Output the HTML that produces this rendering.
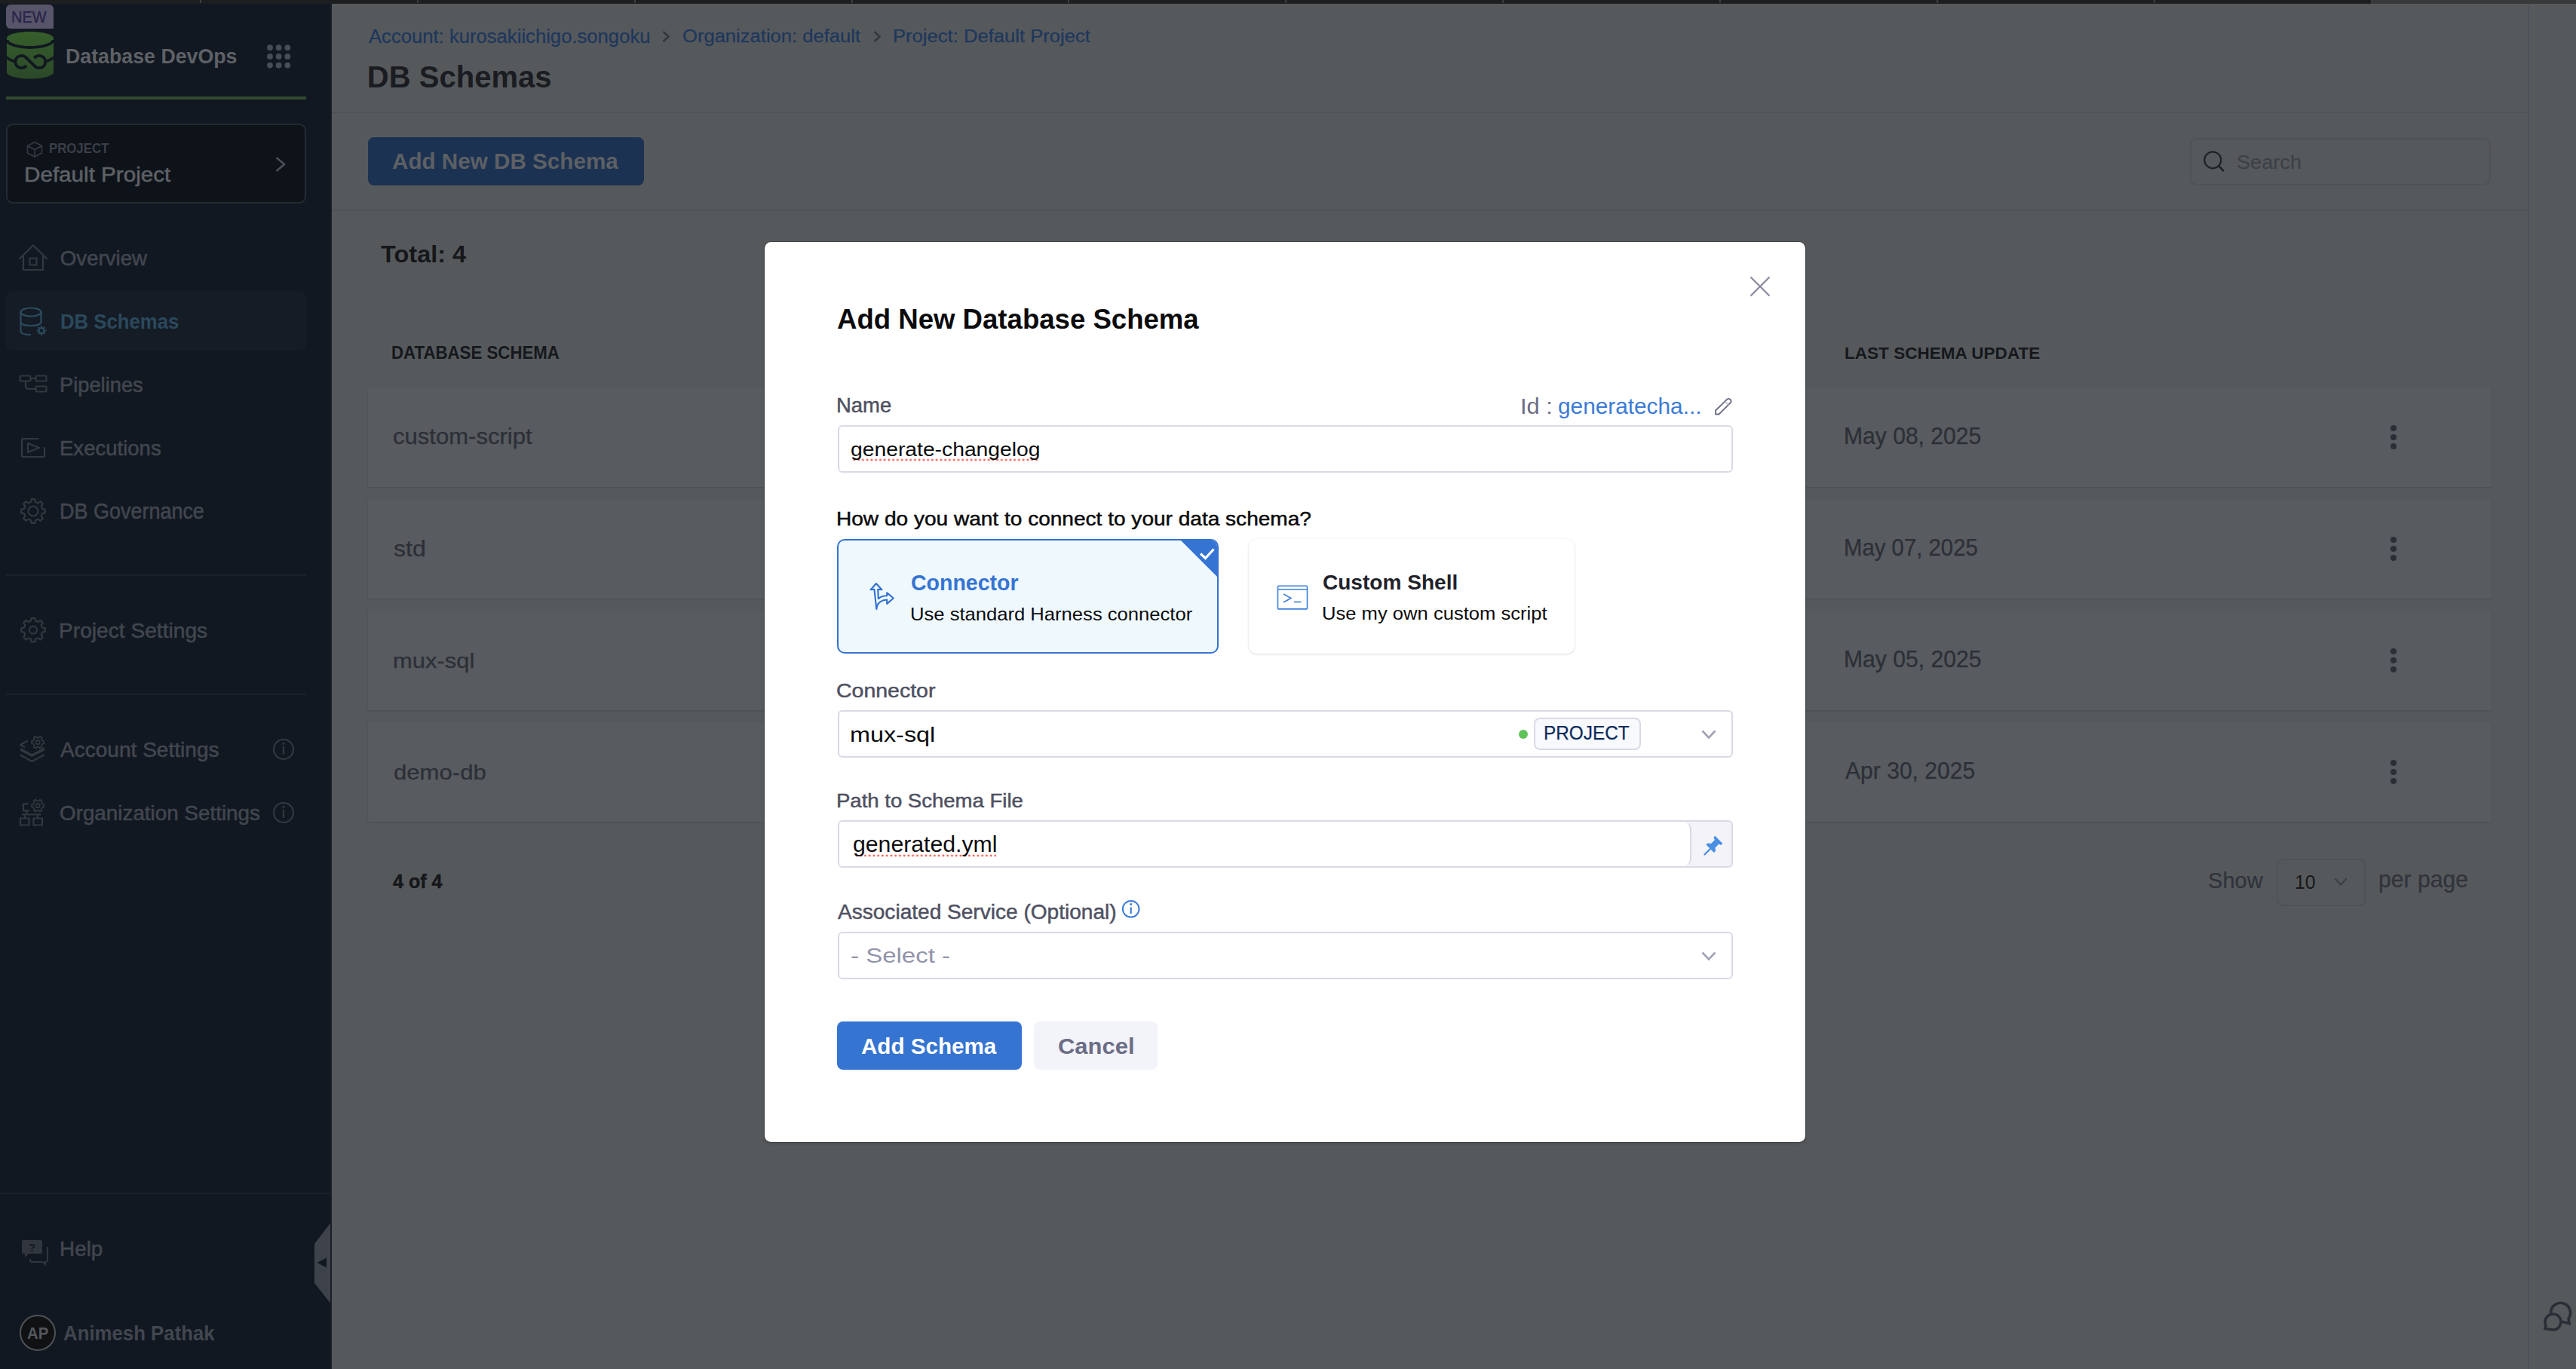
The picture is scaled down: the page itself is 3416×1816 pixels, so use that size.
<!DOCTYPE html>
<html><head><meta charset="utf-8">
<style>
*{box-sizing:border-box;margin:0;padding:0}
html,body{width:3416px;height:1816px;overflow:hidden}
body{background:#56595c;font-family:"Liberation Sans",sans-serif;position:relative}
.a{position:absolute}
.t{position:absolute;white-space:nowrap;transform-origin:0 0}
svg{position:absolute;overflow:visible}
</style></head><body>
<!-- top strip -->
<div class="a" style="left:0;top:0;width:3416px;height:4.5px;background:#1d1e20"></div><div class="a" style="left:3144px;top:0;width:272px;height:4.5px;background:#38393b"></div><div class="a" style="left:265.0px;top:0;width:2px;height:4px;background:#3d3d3f"></div><div class="a" style="left:552.9px;top:0;width:2px;height:4px;background:#3d3d3f"></div><div class="a" style="left:840.7px;top:0;width:2px;height:4px;background:#3d3d3f"></div><div class="a" style="left:1128.6px;top:0;width:2px;height:4px;background:#3d3d3f"></div><div class="a" style="left:1416.4px;top:0;width:2px;height:4px;background:#3d3d3f"></div><div class="a" style="left:1704.2px;top:0;width:2px;height:4px;background:#3d3d3f"></div><div class="a" style="left:1992.1px;top:0;width:2px;height:4px;background:#3d3d3f"></div><div class="a" style="left:2280.0px;top:0;width:2px;height:4px;background:#3d3d3f"></div><div class="a" style="left:2567.8px;top:0;width:2px;height:4px;background:#3d3d3f"></div><div class="a" style="left:2855.7px;top:0;width:2px;height:4px;background:#3d3d3f"></div><div class="a" style="left:3143.5px;top:0;width:2px;height:4px;background:#3d3d3f"></div>

<!-- sidebar -->
<div class="a" style="left:0;top:5px;width:440px;height:1811px;background:#111821"></div>
<div class="a" style="left:8px;top:6px;width:63px;height:32px;background:#58556b;border-radius:6px 6px 0 6px"></div>
<svg style="left:0;top:0" width="80" height="110" viewBox="0 0 80 110">
 <defs><linearGradient id="lg" x1="0" y1="0" x2="0" y2="1"><stop offset="0" stop-color="#365e2a"/><stop offset="1" stop-color="#2b4829"/></linearGradient></defs>
 <path d="M9 50.6 A31 8.6 0 0 1 71 50.6 V96 A31 8.6 0 0 1 9 96 Z" fill="url(#lg)"/>
 <path d="M9.5 53 A30.5 10 0 0 0 70.5 53" fill="none" stroke="#111821" stroke-width="3.8"/>
 <path d="M8 76 Q14 80 20 82" fill="none" stroke="#111821" stroke-width="3.8"/>
 <path d="M72 76 Q66 80 60 82" fill="none" stroke="#111821" stroke-width="3.8"/>
 <path d="M35 87 A8.2 8.2 0 1 1 35 77 L45.5 87 A8.2 8.2 0 1 0 45.5 77" fill="none" stroke="#111821" stroke-width="3.8"/>
</svg>
<svg style="left:0;top:0" width="440" height="280">
 <g fill="#484c55"><circle cx="358" cy="63.2" r="3.9"/><circle cx="369.6" cy="63.2" r="3.9"/><circle cx="381.3" cy="63.2" r="3.9"/>
 <circle cx="358" cy="74.9" r="3.9"/><circle cx="369.6" cy="74.9" r="3.9"/><circle cx="381.3" cy="74.9" r="3.9"/>
 <circle cx="358" cy="86.6" r="3.9"/><circle cx="369.6" cy="86.6" r="3.9"/><circle cx="381.3" cy="86.6" r="3.9"/></g>
</svg>
<div class="a" style="left:8px;top:128px;width:398px;height:4px;background:#324a2e"></div>
<div class="a" style="left:8px;top:164px;width:398px;height:106px;border:2px solid #252a33;border-radius:9px;background:#0e131a"></div>
<svg style="left:0;top:0" width="440" height="280">
 <g fill="none" stroke="#363942" stroke-width="1.6" stroke-linejoin="round">
  <path d="M46 188.5 L55.5 193.5 V203 L46 208 L36.5 203 V193.5 Z"/>
  <path d="M36.5 193.5 L46 198.5 L55.5 193.5 M46 198.5 V208"/>
 </g>
 <path d="M366.5 209 L377 218 L366.5 227" fill="none" stroke="#4a4f58" stroke-width="2.6"/>
</svg>

<!-- nav -->
<div class="a" style="left:8px;top:386px;width:398px;height:79px;background:#151c26;border-radius:8px"></div>
<svg style="left:0;top:0" width="440" height="1816">
 <g fill="none" stroke="#33373f" stroke-width="2.2" stroke-linejoin="round">
  <!-- house -->
  <path d="M25.5 343.5 L44 325.5 L62.5 343.5 M31 340 V358 H57 V340"/>
  <rect x="39.5" y="342.5" width="9" height="9"/>
  <!-- pipelines -->
  <rect x="26.5" y="498.5" width="14" height="7" rx="1.5"/>
  <rect x="47.5" y="498.5" width="14" height="7" rx="1.5"/>
  <rect x="47.5" y="512.5" width="14" height="7" rx="1.5"/>
  <path d="M40.5 502 H47.5 M34 505.5 V512 Q34 516 38 516 H47.5"/>
  <!-- executions -->
  <path d="M51.5 582 H30 Q29 582 29 583 V605 Q29 606 30 606 H58 Q59 606 59 605 V593"/>
  <path d="M37 588 L52 594 L37 600 Z"/>
  <!-- gear governance -->
  <circle cx="44" cy="678" r="6.5"/>
  <path d="M56.1 675.0 L59.8 675.7 L59.8 680.3 L56.1 681.0 L54.7 684.5 L56.8 687.6 L53.6 690.8 L50.5 688.7 L47.0 690.1 L46.3 693.8 L41.7 693.8 L41.0 690.1 L37.5 688.7 L34.4 690.8 L31.2 687.6 L33.3 684.5 L31.9 681.0 L28.2 680.3 L28.2 675.7 L31.9 675.0 L33.3 671.5 L31.2 668.4 L34.4 665.2 L37.5 667.3 L41.0 665.9 L41.7 662.2 L46.3 662.2 L47.0 665.9 L50.5 667.3 L53.6 665.2 L56.8 668.4 L54.7 671.5 Z"/>
  <!-- gear project settings -->
  <circle cx="44" cy="835.7" r="5"/>
  <path d="M56.1 832.7 L59.8 833.4 L59.8 838.0 L56.1 838.7 L54.7 842.2 L56.8 845.3 L53.6 848.5 L50.5 846.4 L47.0 847.8 L46.3 851.5 L41.7 851.5 L41.0 847.8 L37.5 846.4 L34.4 848.5 L31.2 845.3 L33.3 842.2 L31.9 838.7 L28.2 838.0 L28.2 833.4 L31.9 832.7 L33.3 829.2 L31.2 826.1 L34.4 822.9 L37.5 825.0 L41.0 823.6 L41.7 819.9 L46.3 819.9 L47.0 823.6 L50.5 825.0 L53.6 822.9 L56.8 826.1 L54.7 829.2 Z"/>
  <!-- account settings layers -->
  <path d="M37 982.5 L27 988 L33 991.5"/>
  <path d="M26.6 1001.3 L42.3 1010 L58.9 1001.3"/>
  <path d="M56.2 982.7 L58.3 983.1 L58.3 986.3 L56.2 986.7 L54.9 988.9 L55.7 991.0 L52.9 992.6 L51.5 990.9 L48.9 990.9 L47.5 992.6 L44.7 991.0 L45.5 988.9 L44.2 986.7 L42.1 986.3 L42.1 983.1 L44.2 982.7 L45.5 980.5 L44.7 978.4 L47.5 976.8 L48.9 978.5 L51.5 978.5 L52.9 976.8 L55.7 978.4 L54.9 980.5 Z" stroke-width="1.8"/>
  <circle cx="50.2" cy="984.7" r="2.6" stroke-width="1.6"/>
  <!-- org -->
  <rect x="27" y="1085.5" width="11.5" height="9"/>
  <rect x="44.5" y="1085.5" width="11.5" height="9"/>
  <path d="M37.6 1066.3 H31 V1075.3 H39 M35.2 1075.3 V1080.5 M29 1080.5 H54.2 M32.8 1080.5 V1085.5 M49.9 1080.5 V1085.5"/>
  <path d="M56.2 1066.7 L58.3 1067.1 L58.3 1070.3 L56.2 1070.7 L54.9 1072.9 L55.7 1075.0 L52.9 1076.6 L51.5 1074.9 L48.9 1074.9 L47.5 1076.6 L44.7 1075.0 L45.5 1072.9 L44.2 1070.7 L42.1 1070.3 L42.1 1067.1 L44.2 1066.7 L45.5 1064.5 L44.7 1062.4 L47.5 1060.8 L48.9 1062.5 L51.5 1062.5 L52.9 1060.8 L55.7 1062.4 L54.9 1064.5 Z" stroke-width="1.8"/>
  <circle cx="50.2" cy="1068.7" r="2.6" stroke-width="1.6"/>
  <!-- info icons -->
  <circle cx="376" cy="994" r="13"/>
  <circle cx="376" cy="1078" r="13"/>
  <path d="M376 990 V1001 M376 1074 V1085"/>
 </g>
 <path d="M27 992 L42.3 1000 L59 991.5 V995.5 L42.3 1004 L27 996 Z" fill="#33373f"/>
 <g fill="#33373f"><circle cx="376" cy="986.5" r="1.6"/><circle cx="376" cy="1070.5" r="1.6"/></g>
 <!-- db schemas icon active -->
 <g fill="none" stroke="#2b4b5e" stroke-width="2.2">
  <ellipse cx="41" cy="414" rx="13.5" ry="5.5"/>
  <path d="M27.5 414 V439 Q27.5 444 41 444 M27.5 426.5 Q27.5 432 41 432 Q54.5 432 54.5 426.5 M54.5 414 V428"/>
  <circle cx="55" cy="438.5" r="3.5"/>
 </g>
 <path d="M55 432 V434 M55 443 V445 M48.5 438.5 H50.5 M59.5 438.5 H61.5 M50.5 434 L52 435.5 M58 441.5 L59.5 443 M50.5 443 L52 441.5 M58 435.5 L59.5 434" stroke="#2b4b5e" stroke-width="2"/>
 <!-- help icon -->
 <path d="M31 1645 H54 Q56 1645 56 1647 V1661 Q56 1663 54 1663 H38 L33 1668 V1663 H31 Q29 1663 29 1661 V1647 Q29 1645 31 1645 Z" fill="#30353e"/>
 <path d="M40 1670 V1671 Q40 1674 43 1674 H57 L60 1677 V1674 Q63 1674 63 1671 V1654" fill="none" stroke="#30353e" stroke-width="2"/>
 <text x="42.5" y="1660" font-family="Liberation Sans" font-size="14" font-weight="bold" fill="#111821" text-anchor="middle">?</text>
</svg>
<div class="a" style="left:8px;top:762px;width:398px;height:2px;background:#1c222b"></div>
<div class="a" style="left:8px;top:920px;width:398px;height:2px;background:#1c222b"></div>
<div class="a" style="left:0;top:1582px;width:439px;height:2px;background:#1c222b"></div>
<svg style="left:0;top:0" width="440" height="1816">
 <path d="M440 1620 L417 1650 V1702 L440 1731 Z" fill="#3e424b"/>
 <path d="M420.5 1675 L433 1668.5 V1681.5 Z" fill="#111821"/>
</svg>
<div class="a" style="left:26px;top:1744px;width:48px;height:48px;border-radius:50%;border:2px solid #4f5256;background:#101113"></div>

<div class="a" style="left:438px;top:5px;width:2px;height:1811px;background:#1b1f25"></div>
<!-- main -->
<svg style="left:0;top:0" width="1300" height="80">
 <path d="M879.5 42 L886.5 48.5 L879.5 55" fill="none" stroke="#34373e" stroke-width="2.6"/>
 <path d="M1159.5 42 L1166.5 48.5 L1159.5 55" fill="none" stroke="#34373e" stroke-width="2.6"/>
</svg>
<div class="a" style="left:3352px;top:5px;width:2px;height:1811px;background:#4e5259"></div>
<div class="a" style="left:440px;top:147.5px;width:2912px;height:2px;background:#4f5358"></div>
<div class="a" style="left:440px;top:277.5px;width:2912px;height:2px;background:#4f5358"></div>
<div class="a" style="left:488px;top:182px;width:366px;height:64px;border-radius:8px;background:#1c3253"></div>
<div class="a" style="left:2904px;top:182.5px;width:399px;height:63px;border-radius:9px;border:2px solid #4e5258"></div>
<svg style="left:0;top:0" width="3416" height="1816">
 <circle cx="2934.3" cy="212.3" r="11" fill="none" stroke="#1f2227" stroke-width="2.2"/>
 <path d="M2942 220 L2949 227" stroke="#1f2227" stroke-width="2.6"/>
</svg>
<!-- table cards -->
<div class="a" style="left:488px;top:513.5px;width:2816px;height:132.5px;background:#585b5f;box-shadow:0 1px 2px rgba(0,0,0,.12)"></div>
<div class="a" style="left:488px;top:661.5px;width:2816px;height:132.5px;background:#585b5f;box-shadow:0 1px 2px rgba(0,0,0,.12)"></div>
<div class="a" style="left:488px;top:809.5px;width:2816px;height:132.5px;background:#585b5f;box-shadow:0 1px 2px rgba(0,0,0,.12)"></div>
<div class="a" style="left:488px;top:957.5px;width:2816px;height:132.5px;background:#585b5f;box-shadow:0 1px 2px rgba(0,0,0,.12)"></div>
<svg style="left:0;top:0" width="3416" height="1816">
 <g fill="#2b2e36">
  <circle cx="3174" cy="568" r="4"/><circle cx="3174" cy="580" r="4"/><circle cx="3174" cy="592" r="4"/>
  <circle cx="3174" cy="716" r="4"/><circle cx="3174" cy="728" r="4"/><circle cx="3174" cy="740" r="4"/>
  <circle cx="3174" cy="864" r="4"/><circle cx="3174" cy="876" r="4"/><circle cx="3174" cy="888" r="4"/>
  <circle cx="3174" cy="1012" r="4"/><circle cx="3174" cy="1024" r="4"/><circle cx="3174" cy="1036" r="4"/>
 </g>
 <path d="M3096.5 1165.5 L3104 1173.5 L3111.5 1165.5" fill="none" stroke="#3a3d45" stroke-width="2"/>
 <!-- chat icon -->
 <g fill="none" stroke="#2b2e36" stroke-width="3.6" stroke-linecap="round">
  <path d="M3382.5 1741 A13 13 0 1 1 3406 1749 L3407 1755.5 L3399 1753.5"/>
  <path d="M3385 1764 A10.5 10.5 0 1 0 3376 1758 L3375 1762.5 Z"/>
 </g>
</svg>
<div class="a" style="left:3019px;top:1138.5px;width:118px;height:63px;border-radius:8px;border:2px solid #4e5258"></div>

<!-- modal -->
<div class="a" style="left:1013.7px;top:320.8px;width:1380.5px;height:1194.3px;background:#fff;border-radius:8.5px;box-shadow:0 0 0 1px rgba(30,33,38,.35),0 2px 4px rgba(0,0,0,.15)"></div>
<svg style="left:0;top:0" width="3416" height="1816">
 <path d="M2321.5 367.5 L2346.5 392.5 M2346.5 367.5 L2321.5 392.5" stroke="#8c8da0" stroke-width="2.4"/>
 <!-- pencil -->
 <g fill="none" stroke="#6b6d85" stroke-width="1.8" stroke-linejoin="round">
  <path d="M2275 544.5 L2290.5 529.5 Q2292.5 528 2294.5 530 Q2296.5 532 2295 534 L2279.5 549.5 H2275 Z"/>
  <path d="M2288 533 L2292 537" stroke="#c5c6d3"/>
 </g>
</svg>
<div class="a" style="left:1110.5px;top:563.5px;width:1187px;height:63px;border:2px solid #d9dae6;border-radius:6px"></div>
<div class="a" style="left:1130px;top:607.5px;width:247px;height:4px;background-image:radial-gradient(circle,#f0695f 1.3px,transparent 1.7px);background-size:5.75px 4px"></div>

<!-- cards -->
<div class="a" style="left:1110px;top:715px;width:505.5px;height:152px;border:2px solid #3574d3;border-radius:10px;background:#eff8fd;overflow:hidden">
 <div class="a" style="right:-2px;top:-2px;width:0;height:0;border-style:solid;border-width:0 52px 52px 0;border-color:transparent #3574d3 transparent transparent"></div>
</div>
<div class="a" style="left:1656px;top:715px;width:432px;height:152px;border-radius:10px;background:#fff;box-shadow:0 0 1px rgba(40,41,61,.10),0 1px 3px rgba(96,97,112,.20)"></div>
<svg style="left:0;top:0" width="3416" height="1816">
 <path d="M1592 734.5 L1598.5 740.5 L1609.5 728.5" fill="none" stroke="#fff" stroke-width="3.2"/>
 <!-- connector icon -->
 <path d="M1162.3 808 L1159.4 781.8 L1154.6 782.2 L1161.9 774 L1169.4 782.2 L1164.2 781.8 L1164.8 794.2 Q1168.5 790.4 1176.2 790.2 L1176.2 786.4 L1184.8 793.5 L1176.2 801 L1176.2 795.5 Q1166.5 796 1163.2 803.5 Z" fill="none" stroke="#3070d0" stroke-width="2.1" stroke-linejoin="round"/>
 <!-- terminal icon -->
 <g fill="none" stroke="#3d7fd9" stroke-width="1.6">
  <rect x="1694.5" y="777.3" width="39" height="30.6" rx="1"/>
  <path d="M1694.5 781.8 H1733.5"/>
  <path d="M1702 788 L1712 793.5 L1702 799"/>
  <path d="M1716 798.5 H1725.5"/>
 </g>
</svg>

<div class="a" style="left:1110.5px;top:941.5px;width:1187px;height:63px;border:2px solid #d9dae6;border-radius:6px"></div>
<div class="a" style="left:2014px;top:968px;width:12px;height:12px;border-radius:50%;background:#5fc35b"></div>
<div class="a" style="left:2033.5px;top:951.5px;width:142px;height:43px;border:2px solid #d9dae6;border-radius:8px;background:#f8f9fc"></div>
<svg style="left:0;top:0" width="3416" height="1816">
 <path d="M2257.5 969.5 L2266 978.5 L2274.5 969.5" fill="none" stroke="#a2a3b5" stroke-width="2.6"/>
 <path d="M2257.5 1263.5 L2266 1272.5 L2274.5 1263.5" fill="none" stroke="#a2a3b5" stroke-width="2.6"/>
</svg>

<div class="a" style="left:1110.5px;top:1087.5px;width:1187px;height:63px;border:2px solid #d9dae6;border-radius:6px;background:#f3f3f8;overflow:hidden">
 <div class="a" style="left:0;top:0;width:1130px;height:59px;background:#fff;border-radius:0 10px 10px 0;border-right:2px solid #d9dae6"></div>
</div>
<div class="a" style="left:1133px;top:1132.5px;width:188px;height:4px;background-image:radial-gradient(circle,#f0695f 1.3px,transparent 1.7px);background-size:5.75px 4px"></div>
<svg style="left:0;top:0" width="3416" height="1816">
 <g fill="#4a90e2">
  <path d="M2274 1108.5 L2284.5 1119 L2282 1121 L2279.5 1119.5 L2274.5 1124.5 L2275 1129 L2273 1131 L2262.5 1120.5 L2264.5 1118.5 L2269 1119 L2274 1114 L2272.5 1111.5 Z"/>
 </g>
 <path d="M2268 1126 L2260.5 1133.5" stroke="#4a90e2" stroke-width="2.4" stroke-linecap="round"/>
 <!-- info -->
 <circle cx="1499.7" cy="1205.8" r="10.8" fill="none" stroke="#3b7bd6" stroke-width="2"/>
 <path d="M1499.7 1203.5 V1212" stroke="#3b7bd6" stroke-width="2.2"/>
 <circle cx="1499.7" cy="1199.5" r="1.5" fill="#3b7bd6"/>
</svg>
<div class="a" style="left:1110.5px;top:1235.5px;width:1187px;height:63px;border:2px solid #d9dae6;border-radius:6px"></div>

<div class="a" style="left:1110px;top:1355px;width:244.5px;height:63.5px;border-radius:8px;background:#3574d1"></div>
<div class="a" style="left:1371px;top:1355px;width:163.5px;height:63.5px;border-radius:8px;background:#f3f3fa"></div>

<div class="t" style="left:14.8px;top:11.9px;font-size:21.69px;line-height:21.69px;font-weight:normal;color:#2b2648;transform:scaleX(0.92);-webkit-text-stroke:0.5px #2b2648">NEW</div>
<div class="t" style="left:86.6px;top:60.7px;font-size:27.25px;line-height:27.25px;font-weight:bold;color:#5e6166;transform:scaleX(0.9817)">Database DevOps</div>
<div class="t" style="left:65.4px;top:188.7px;font-size:17.53px;line-height:17.53px;font-weight:bold;color:#3b3e47;transform:scaleX(0.9579)">PROJECT</div>
<div class="t" style="left:32.4px;top:217.6px;font-size:27.53px;line-height:27.53px;font-weight:normal;color:#5e6166;transform:scaleX(1.0768);-webkit-text-stroke:0.55px #5e6166">Default Project</div>
<div class="t" style="left:79.8px;top:328.9px;font-size:27.67px;line-height:27.67px;font-weight:normal;color:#42464f;-webkit-text-stroke:0.55px #42464f">Overview</div>
<div class="t" style="left:79.7px;top:412.9px;font-size:27.67px;line-height:27.67px;font-weight:bold;color:#2b495c;transform:scaleX(0.9305)">DB Schemas</div>
<div class="t" style="left:79.3px;top:496.9px;font-size:27.67px;line-height:27.67px;font-weight:normal;color:#42464f;transform:scaleX(0.9862);-webkit-text-stroke:0.55px #42464f">Pipelines</div>
<div class="t" style="left:79.3px;top:581.0px;font-size:27.8px;line-height:27.8px;font-weight:normal;color:#42464f;transform:scaleX(0.9905);-webkit-text-stroke:0.55px #42464f">Executions</div>
<div class="t" style="left:79.3px;top:664.2px;font-size:28.8px;line-height:28.8px;font-weight:normal;color:#42464f;transform:scaleX(0.9365);-webkit-text-stroke:0.55px #42464f">DB Governance</div>
<div class="t" style="left:78.2px;top:823.2px;font-size:27.94px;line-height:27.94px;font-weight:normal;color:#42464f;transform:scaleX(1.0074);-webkit-text-stroke:0.55px #42464f">Project Settings</div>
<div class="t" style="left:80.4px;top:981.6px;font-size:26.84px;line-height:26.84px;font-weight:normal;color:#42464f;transform:scaleX(1.0456);-webkit-text-stroke:0.55px #42464f">Account Settings</div>
<div class="t" style="left:79.2px;top:1064.6px;font-size:28.08px;line-height:28.08px;font-weight:normal;color:#42464f;transform:scaleX(0.9906);-webkit-text-stroke:0.55px #42464f">Organization Settings</div>
<div class="t" style="left:79.1px;top:1643.1px;font-size:27.8px;line-height:27.8px;font-weight:normal;color:#42464f;-webkit-text-stroke:0.55px #42464f">Help</div>
<div class="t" style="left:35.5px;top:1757.6px;font-size:21.69px;line-height:21.69px;font-weight:bold;color:#55585d;transform:scaleX(0.9359)">AP</div>
<div class="t" style="left:83.9px;top:1754.9px;font-size:27.12px;line-height:27.12px;font-weight:bold;color:#42464f;transform:scaleX(0.9516)">Animesh Pathak</div>
<div class="t" style="left:488.7px;top:35.8px;font-size:24.91px;line-height:24.91px;font-weight:normal;color:#1d375c;transform:scaleX(1.0296);-webkit-text-stroke:0.25px #1d375c">Account: kurosakiichigo.songoku</div>
<div class="t" style="left:904.7px;top:36.0px;font-size:24.64px;line-height:24.64px;font-weight:normal;color:#1d375c;transform:scaleX(1.0387);-webkit-text-stroke:0.25px #1d375c">Organization: default</div>
<div class="t" style="left:1184.0px;top:36.0px;font-size:24.64px;line-height:24.64px;font-weight:normal;color:#1d375c;transform:scaleX(1.0399);-webkit-text-stroke:0.25px #1d375c">Project: Default Project</div>
<div class="t" style="left:486.8px;top:82.2px;font-size:40.06px;line-height:40.06px;font-weight:bold;color:#1a1c21">DB Schemas</div>
<div class="t" style="left:519.7px;top:199.3px;font-size:29.59px;line-height:29.59px;font-weight:bold;color:#5d6064;transform:scaleX(1.0022)">Add New DB Schema</div>
<div class="t" style="left:2966.1px;top:201.9px;font-size:26.15px;line-height:26.15px;font-weight:normal;color:#3d4147;transform:scaleX(1.0384);-webkit-text-stroke:0.25px #3d4147">Search</div>
<div class="t" style="left:504.9px;top:320.7px;font-size:32.07px;line-height:32.07px;font-weight:bold;color:#15171a;transform:scaleX(1.0141)">Total: 4</div>
<div class="t" style="left:519.4px;top:456.3px;font-size:23.81px;line-height:23.81px;font-weight:bold;color:#15181c;transform:scaleX(0.9349)">DATABASE SCHEMA</div>
<div class="t" style="left:2445.5px;top:456.8px;font-size:22.95px;line-height:22.95px;font-weight:bold;color:#15181c;transform:scaleX(0.9831)">LAST SCHEMA UPDATE</div>
<div class="t" style="left:521.2px;top:565.3px;font-size:29.04px;line-height:29.04px;font-weight:normal;color:#2c2f37;transform:scaleX(1.07);-webkit-text-stroke:0.25px #2c2f37">custom-script</div>
<div class="t" style="left:522.0px;top:713.9px;font-size:28.91px;line-height:28.91px;font-weight:normal;color:#2c2f37;transform:scaleX(1.1076);-webkit-text-stroke:0.25px #2c2f37">std</div>
<div class="t" style="left:521.0px;top:862.9px;font-size:27.53px;line-height:27.53px;font-weight:normal;color:#2c2f37;transform:scaleX(1.1253);-webkit-text-stroke:0.25px #2c2f37">mux-sql</div>
<div class="t" style="left:521.8px;top:1009.9px;font-size:28.22px;line-height:28.22px;font-weight:normal;color:#2c2f37;transform:scaleX(1.1021);-webkit-text-stroke:0.25px #2c2f37">demo-db</div>
<div class="t" style="left:2444.6px;top:564.1px;font-size:30.93px;line-height:30.93px;font-weight:normal;color:#2c2f37;transform:scaleX(0.9725);-webkit-text-stroke:0.25px #2c2f37">May 08, 2025</div>
<div class="t" style="left:2444.7px;top:712.1px;font-size:30.93px;line-height:30.93px;font-weight:normal;color:#2c2f37;transform:scaleX(0.9491);-webkit-text-stroke:0.25px #2c2f37">May 07, 2025</div>
<div class="t" style="left:2444.6px;top:860.1px;font-size:30.93px;line-height:30.93px;font-weight:normal;color:#2c2f37;transform:scaleX(0.9742);-webkit-text-stroke:0.25px #2c2f37">May 05, 2025</div>
<div class="t" style="left:2446.8px;top:1008.1px;font-size:30.93px;line-height:30.93px;font-weight:normal;color:#2c2f37;transform:scaleX(0.9727);-webkit-text-stroke:0.25px #2c2f37">Apr 30, 2025</div>
<div class="t" style="left:520.6px;top:1156.7px;font-size:25.19px;line-height:25.19px;font-weight:bold;color:#15171a;transform:scaleX(0.9963);-webkit-text-stroke:0.5px #15171a">4 of 4</div>
<div class="t" style="left:2928.2px;top:1153.8px;font-size:28.77px;line-height:28.77px;font-weight:normal;color:#30333b;transform:scaleX(1.0103);-webkit-text-stroke:0.25px #30333b">Show</div>
<div class="t" style="left:3042.5px;top:1157.5px;font-size:25.37px;line-height:25.37px;font-weight:normal;color:#15171a;transform:scaleX(0.9813)">10</div>
<div class="t" style="left:3153.5px;top:1151.3px;font-size:31.76px;line-height:31.76px;font-weight:normal;color:#30333b;transform:scaleX(0.9486);-webkit-text-stroke:0.25px #30333b">per page</div>
<div class="t" style="left:1110.0px;top:406.4px;font-size:36.89px;line-height:36.89px;font-weight:bold;color:#0b0b0d;transform:scaleX(0.9918)">Add New Database Schema</div>
<div class="t" style="left:1109.0px;top:523.6px;font-size:28.05px;line-height:28.05px;font-weight:normal;color:#4f5162;transform:scaleX(0.9776);-webkit-text-stroke:0.5px #4f5162">Name</div>
<div class="t" style="left:2016.1px;top:524.6px;font-size:29.04px;line-height:29.04px;font-weight:normal;color:#6b6d85;transform:scaleX(1.0614)">Id :</div>
<div class="t" style="left:2065.7px;top:524.6px;font-size:29.04px;line-height:29.04px;font-weight:normal;color:#3b7bd6;transform:scaleX(1.0261)">generatecha...</div>
<div class="t" style="left:1127.6px;top:582.7px;font-size:26.02px;line-height:26.02px;font-weight:normal;color:#0b0b0d;transform:scaleX(1.0867)">generate-changelog</div>
<div class="t" style="left:1109.0px;top:674.5px;font-size:26.7px;line-height:26.7px;font-weight:normal;color:#0b0b0d;transform:scaleX(1.051);-webkit-text-stroke:0.5px #0b0b0d">How do you want to connect to your data schema?</div>
<div class="t" style="left:1208.2px;top:758.1px;font-size:29.37px;line-height:29.37px;font-weight:bold;color:#3574d3;transform:scaleX(0.971)">Connector</div>
<div class="t" style="left:1206.9px;top:802.5px;font-size:23.81px;line-height:23.81px;font-weight:normal;color:#0b0b0d;transform:scaleX(1.0757)">Use standard Harness connector</div>
<div class="t" style="left:1753.9px;top:759.2px;font-size:28.08px;line-height:28.08px;font-weight:bold;color:#22222a">Custom Shell</div>
<div class="t" style="left:1753.1px;top:802.3px;font-size:24.23px;line-height:24.23px;font-weight:normal;color:#0b0b0d;transform:scaleX(1.0565)">Use my own custom script</div>
<div class="t" style="left:1109.4px;top:902.7px;font-size:26.37px;line-height:26.37px;font-weight:normal;color:#4f5162;transform:scaleX(1.0801);-webkit-text-stroke:0.5px #4f5162">Connector</div>
<div class="t" style="left:1126.9px;top:959.5px;font-size:28.36px;line-height:28.36px;font-weight:normal;color:#0b0b0d;transform:scaleX(1.1407)">mux-sql</div>
<div class="t" style="left:2046.5px;top:959.2px;font-size:26.23px;line-height:26.23px;font-weight:normal;color:#0a2b5c;transform:scaleX(0.9295);-webkit-text-stroke:0.25px #0a2b5c">PROJECT</div>
<div class="t" style="left:1108.6px;top:1048.6px;font-size:26.02px;line-height:26.02px;font-weight:normal;color:#4f5162;transform:scaleX(1.0579);-webkit-text-stroke:0.5px #4f5162">Path to Schema File</div>
<div class="t" style="left:1131.4px;top:1105.0px;font-size:29.32px;line-height:29.32px;font-weight:normal;color:#0b0b0d;transform:scaleX(1.0309)">generated.yml</div>
<div class="t" style="left:1110.7px;top:1194.5px;font-size:28.36px;line-height:28.36px;font-weight:normal;color:#4f5162;transform:scaleX(0.9893);-webkit-text-stroke:0.5px #4f5162">Associated Service (Optional)</div>
<div class="t" style="left:1127.5px;top:1253.0px;font-size:28.36px;line-height:28.36px;font-weight:normal;color:#9293ab;transform:scaleX(1.1635)">- Select -</div>
<div class="t" style="left:1141.9px;top:1372.5px;font-size:29.32px;line-height:29.32px;font-weight:bold;color:#ffffff;transform:scaleX(1.0097)">Add Schema</div>
<div class="t" style="left:1402.6px;top:1372.5px;font-size:29.32px;line-height:29.32px;font-weight:bold;color:#6b6d85;transform:scaleX(1.0566)">Cancel</div>
</body></html>
